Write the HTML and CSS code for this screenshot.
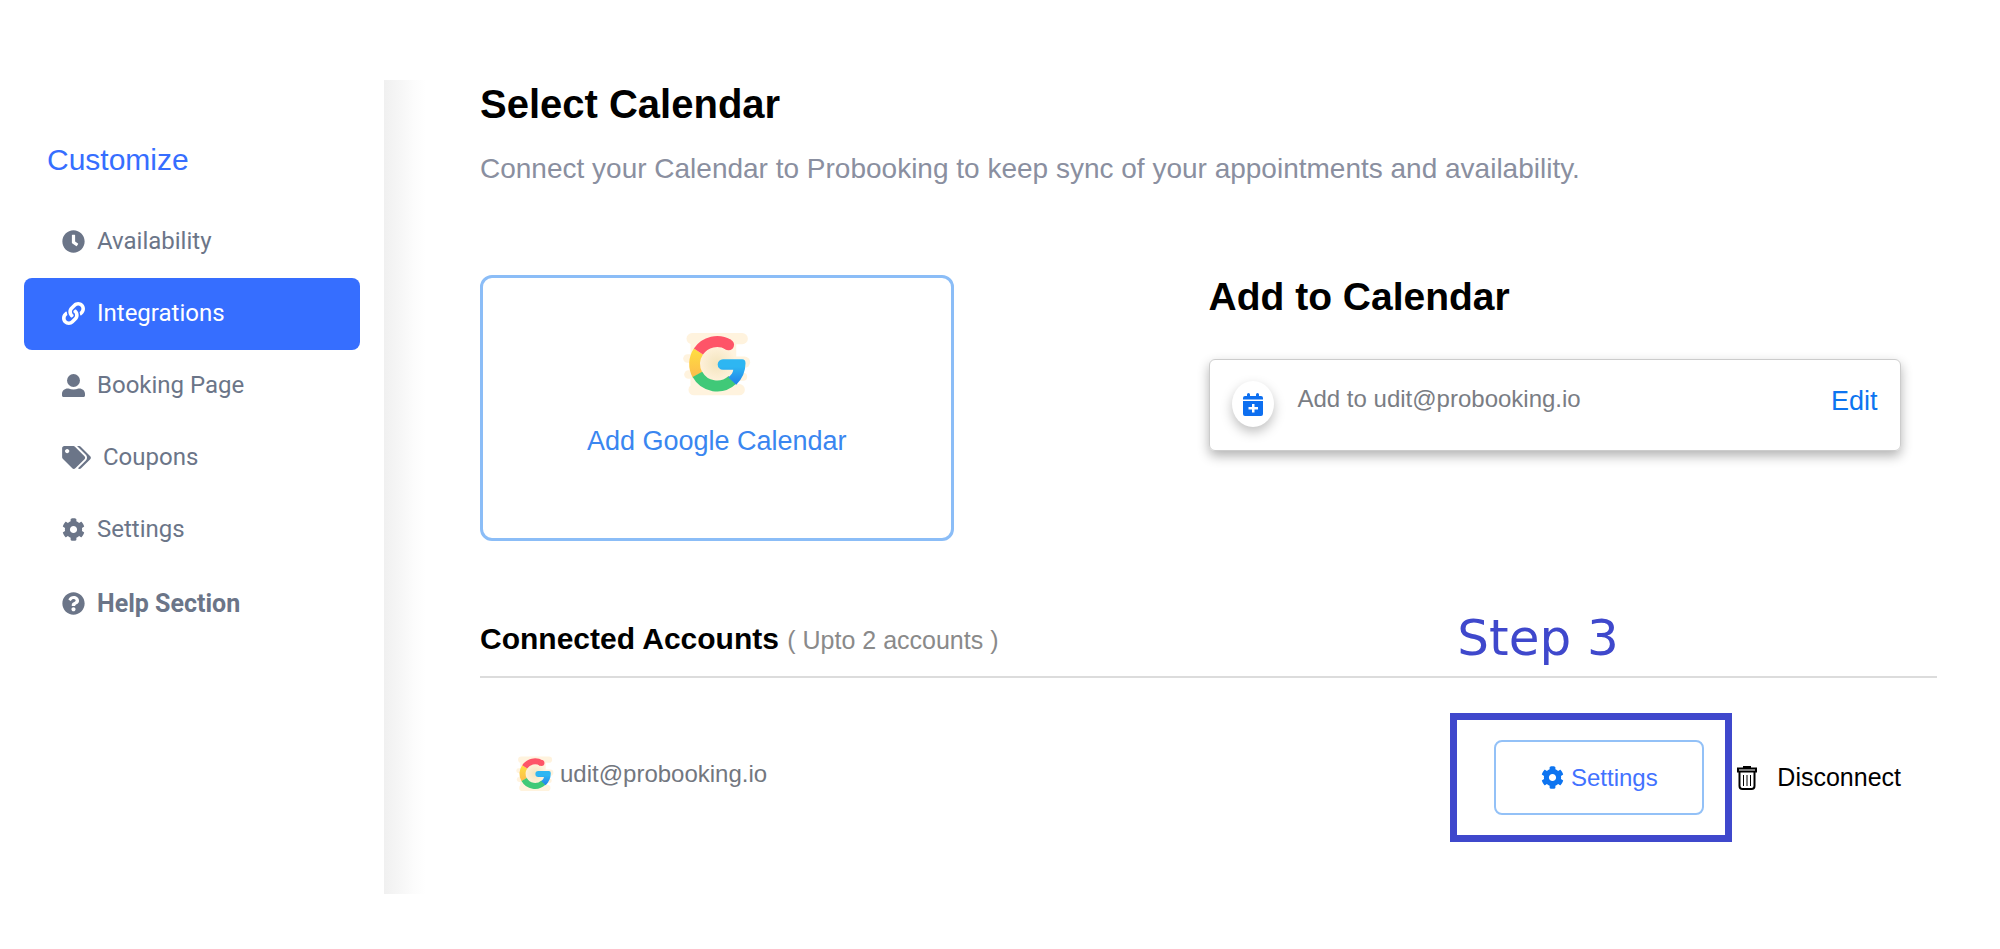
FILE: index.html
```html
<!DOCTYPE html>
<html lang="en">
<head>
    <meta charset="UTF-8">
    <meta name="viewport" content="width=device-width, initial-scale=1.0">
    <title>Select Calendar</title>
    <link rel="stylesheet" href="styles.css">
</head>
<body>
    <!-- Shared icons -->
    <svg class="sprite" aria-hidden="true">
        <symbol id="icon-cog" viewBox="0 0 512 512">
            <path d="M487.4 315.7l-42.6-24.6c4.3-23.2 4.3-47 0-70.2l42.6-24.6c4.9-2.8 7.1-8.6 5.5-14-11.1-35.6-30-67.8-54.7-94.6-3.8-4.1-10-5.1-14.8-2.3L380.8 110c-17.9-15.4-38.5-27.3-60.8-35.1V25.8c0-5.6-3.9-10.5-9.4-11.7-36.7-8.2-74.3-7.8-109.2 0-5.5 1.2-9.4 6.1-9.4 11.7V75c-22.2 7.9-42.8 19.8-60.8 35.1L88.7 85.5c-4.9-2.8-11-1.9-14.8 2.3-24.7 26.7-43.6 58.9-54.7 94.6-1.7 5.4.6 11.2 5.5 14L67.3 221c-4.3 23.2-4.3 47 0 70.2l-42.6 24.6c-4.9 2.8-7.1 8.6-5.5 14 11.1 35.6 30 67.8 54.7 94.6 3.8 4.1 10 5.1 14.8 2.3l42.6-24.6c17.9 15.4 38.5 27.3 60.8 35.1v49.2c0 5.6 3.9 10.5 9.4 11.7 36.7 8.2 74.3 7.8 109.2 0 5.5-1.2 9.4-6.1 9.4-11.7v-49.2c22.2-7.9 42.8-19.8 60.8-35.1l42.6 24.6c4.9 2.8 11 1.9 14.8-2.3 24.7-26.7 43.6-58.9 54.7-94.6 1.5-5.5-.7-11.3-5.6-14.1zM256 336c-44.1 0-80-35.9-80-80s35.9-80 80-80 80 35.9 80 80-35.9 80-80 80z"/>
        </symbol>
        <linearGradient id="g-yellow" x1="0" y1="0" x2="0" y2="1">
            <stop offset="0" stop-color="#fedb41"/>
            <stop offset="1" stop-color="#fdbf4b"/>
        </linearGradient>
        <linearGradient id="g-blue" x1="0" y1="0" x2="0" y2="1">
            <stop offset="0.3" stop-color="#2eb6f2"/>
            <stop offset="1" stop-color="#2180e8"/>
        </linearGradient>
        <radialGradient id="g-center">
            <stop offset="0" stop-color="#f3e4bd"/>
            <stop offset="1" stop-color="#fff2dc"/>
        </radialGradient>
        <symbol id="icon-google" viewBox="668 214 204 196">
            <g fill="#fff3de">
                <rect x="678" y="217" width="185" height="34" rx="17"/>
                <rect x="690" y="245" width="138" height="130"/>
                <rect x="668" y="281" width="60" height="26" rx="13"/>
                <rect x="810" y="288" width="60" height="34" rx="17"/>
                <rect x="671" y="329" width="60" height="26" rx="13"/>
                <rect x="801" y="337" width="60" height="24" rx="12"/>
                <rect x="684" y="371" width="170" height="34" rx="17"/>
            </g>
            <circle cx="770" cy="310" r="55" fill="url(#g-center)"/>
            <path fill="none" stroke="url(#g-yellow)" stroke-width="33" d="M714 273A67.500 67.500 0 0 0 711 343"/>
            <path fill="none" stroke="#40c978" stroke-width="33" d="M711 342A67.500 67.500 0 0 0 816 359"/>
            <path fill="none" stroke="#fe5468" stroke-width="33" d="M714 273A67.500 67.500 0 0 1 805 252.500"/>
            <circle cx="805" cy="252.500" r="16.500" fill="#fe5468"/>
            <path fill="url(#g-blue)" d="M788 296H846Q856 296 856 308Q856 345 828 373L804 351Q818 340 819 328H788A16 16 0 0 1 788 296Z"/>
        </symbol>
    </svg>

    <div class="layout">
        <!-- Sidebar -->
        <aside class="sidebar">
            <h2 class="sidebar-title">Customize</h2>
            <nav class="menu">
                <a href="#" class="menu-item">
                    <svg class="icon" viewBox="0 0 512 512"><path d="M256 8C119 8 8 119 8 256s111 248 248 248 248-111 248-248S393 8 256 8zm57.100 350.100L224.900 294c-3.100-2.300-4.900-5.900-4.900-9.700V116c0-6.600 5.400-12 12-12h48c6.600 0 12 5.400 12 12v137.700l63.500 46.200c5.400 3.900 6.500 11.400 2.600 16.800l-28.200 38.800c-3.900 5.300-11.400 6.500-16.800 2.600z"/></svg>
                    Availability
                </a>
                <a href="#" class="menu-item active">
                    <svg class="icon" viewBox="0 0 512 512"><path d="M326.612 185.391c59.747 59.809 58.927 155.698.36 214.59-.11.12-.24.25-.36.37l-67.2 67.2c-59.27 59.27-155.699 59.262-214.96 0-59.27-59.26-59.27-155.7 0-214.96l37.106-37.106c9.84-9.84 26.786-3.3 27.294 10.606.648 17.722 3.826 35.527 9.69 52.721 1.986 5.822.567 12.262-3.783 16.612l-13.087 13.087c-28.026 28.026-28.905 73.66-1.155 101.96 28.024 28.579 74.086 28.749 102.325.51l67.2-67.19c28.191-28.191 28.073-73.757 0-101.83-3.701-3.694-7.429-6.564-10.341-8.569a16.037 16.037 0 0 1-6.947-12.606c-.396-10.567 3.348-21.456 11.698-29.806l21.054-21.055c5.521-5.521 14.182-6.199 20.584-1.731a152.482 152.482 0 0 1 20.522 17.197zM467.547 44.449c-59.261-59.262-155.69-59.27-214.96 0l-67.2 67.2c-.12.12-.25.25-.36.37-58.566 58.892-59.387 154.781.36 214.59a152.454 152.454 0 0 0 20.521 17.196c6.402 4.468 15.064 3.789 20.584-1.731l21.054-21.055c8.35-8.35 12.094-19.239 11.698-29.806a16.037 16.037 0 0 0-6.947-12.606c-2.912-2.005-6.64-4.875-10.341-8.569-28.073-28.073-28.191-73.639 0-101.83l67.2-67.19c28.239-28.239 74.3-28.069 102.325.51 27.75 28.3 26.872 73.934-1.155 101.96l-13.087 13.087c-4.35 4.35-5.769 10.79-3.783 16.612 5.864 17.194 9.042 34.999 9.69 52.721.509 13.906 17.454 20.446 27.294 10.606l37.106-37.106c59.271-59.259 59.271-155.699.001-214.959z"/></svg>
                    Integrations
                </a>
                <a href="#" class="menu-item">
                    <svg class="icon" viewBox="0 0 512 512"><circle cx="256" cy="144" r="144"/><path d="M0 478v-36c0-72 56-122 128-122h18c70 30 150 30 220 0h18c72 0 128 50 128 122v36c0 20-14 34-34 34H34c-20 0-34-14-34-34z"/></svg>
                    Booking Page
                </a>
                <a href="#" class="menu-item">
                    <svg class="icon icon-wide" viewBox="0 0 640 512"><path d="M497.941 225.941L286.059 14.059A48 48 0 0 0 252.118 0H48C21.49 0 0 21.49 0 48v204.118a48 48 0 0 0 14.059 33.941l211.882 211.882c18.744 18.745 49.136 18.746 67.882 0l204.118-204.118c18.745-18.745 18.745-49.137 0-67.882zM112 160c-26.510 0-48-21.490-48-48s21.490-48 48-48 48 21.490 48 48-21.490 48-48 48zm513.941 133.823L421.823 497.941c-18.745 18.745-49.137 18.745-67.882 0l-.36-.36L527.640 323.522c16.999-16.999 26.360-39.600 26.360-63.640s-9.362-46.641-26.360-63.640L331.397 0h48.721a48 48 0 0 1 33.941 14.059l211.882 211.882c18.745 18.745 18.745 49.137 0 67.882z"/></svg>
                    Coupons
                </a>
                <a href="#" class="menu-item">
                    <svg class="icon"><use href="#icon-cog"/></svg>
                    Settings
                </a>
                <a href="#" class="menu-item help">
                    <svg class="icon" viewBox="0 0 512 512"><path d="M504 256c0 136.997-111.043 248-248 248S8 392.997 8 256C8 119.083 119.043 8 256 8s248 111.083 248 248zM262.655 90c-54.497 0-89.255 22.957-116.549 63.758-3.536 5.286-2.353 12.415 2.715 16.258l34.699 26.31c5.205 3.947 12.621 3.008 16.665-2.122 17.864-22.658 30.113-35.797 57.303-35.797 20.429 0 45.698 13.148 45.698 32.958 0 14.976-12.363 22.667-32.534 33.976C247.128 238.528 216 254.941 216 296v4c0 6.627 5.373 12 12 12h56c6.627 0 12-5.373 12-12v-1.333c0-28.462 83.186-29.647 83.186-106.667 0-58.002-60.165-102-116.531-102zM256 338c-25.365 0-46 20.635-46 46 0 25.364 20.635 46 46 46s46-20.636 46-46c0-25.365-20.635-46-46-46z"/></svg>
                    Help Section
                </a>
            </nav>
        </aside>

        <!-- Main content -->
        <main class="content">
            <h1>Select Calendar</h1>
            <p class="subtitle">Connect your Calendar to Probooking to keep sync of your appointments and availability.</p>

            <div class="row">
                <div class="col">
                    <button type="button" class="google-card">
                        <svg class="google-logo"><use href="#icon-google"/></svg>
                        <span>Add Google Calendar</span>
                    </button>
                </div>
                <div class="col">
                    <h2 class="add-title">Add to Calendar</h2>
                    <div class="add-card">
                        <span class="round-icon">
                            <svg viewBox="0 0 20 23"><path d="M4 1.500a1 1 0 0 1 3 0V3h6V1.500a1 1 0 0 1 3 0V3h2a2 2 0 0 1 2 2v1.500H0V5a2 2 0 0 1 2-2h2zM0 8h20v13a2 2 0 0 1-2 2H2a2 2 0 0 1-2-2zm9 3v3H5.500v2.500H9v3h2.500v-3H15V14h-3.500v-3z"/></svg>
                        </span>
                        <span class="add-text">Add to udit@probooking.io</span>
                        <a href="#" class="edit">Edit</a>
                    </div>
                </div>
            </div>

            <!-- Connected accounts -->
            <section class="accounts">
                <h3>Connected Accounts <small>( Upto 2 accounts )</small></h3>
                <div class="account">
                    <div class="account-name">
                        <svg class="google-small"><use href="#icon-google"/></svg>
                        <span>udit@probooking.io</span>
                    </div>
                    <div class="highlight">
                        <span class="step">Step 3</span>
                        <button type="button" class="btn-settings">
                            <svg class="icon"><use href="#icon-cog"/></svg>
                            Settings
                        </button>
                    </div>
                    <button type="button" class="btn-disconnect">
                        <svg class="trash" viewBox="0 0 20 24"><path d="M7 2.500V1h6v1.500M1 2.500h18v3H1zM2.500 5.500V20a3 3 0 0 0 3 3h9a3 3 0 0 0 3-3V5.500"/><path class="thin" d="M6.500 9v11M10 9v11M13.500 9v11"/></svg>
                        Disconnect
                    </button>
                </div>
            </section>
        </main>
    </div>
</body>
</html>
```
FILE: styles.css
```css
/* General Styles */
* {
    box-sizing: border-box;
}

body {
    margin: 0;
    padding: 80px 0 55px;
    font-family: "Liberation Sans", Arial, sans-serif;
    font-size: 24px;
    background-color: #fff;
    color: #000;
}

h1, h2, h3, p {
    margin: 0;
}

a {
    text-decoration: none;
}

button {
    font-family: inherit;
    background: none;
    border: none;
    padding: 0;
    cursor: pointer;
}

.sprite {
    position: absolute;
    width: 0;
    height: 0;
}

.icon {
    width: 23px;
    height: 23px;
    fill: currentColor;
    flex: none;
}

.icon-wide {
    width: 29px;
}

.layout {
    display: flex;
    min-height: 814px;
}

/* Sidebar */
.sidebar {
    width: 384px;
    flex: none;
    padding: 62px 24px 0;
}

.sidebar-title {
    padding-left: 23px;
    margin-bottom: 28px;
    font-size: 30px;
    line-height: 36px;
    font-weight: normal;
    color: #366eff;
}

.menu-item {
    display: flex;
    align-items: center;
    gap: 12px;
    height: 72px;
    padding: 0 0 2px 38px;
    border-radius: 8px;
    font-family: Roboto, sans-serif;
    font-size: 24px;
    color: #6b7588;
}

.menu-item.active {
    background-color: #366eff;
    color: #fff;
}

.menu-item.help {
    margin-top: 2px;
    font-size: 25px;
    font-weight: bold;
}

/* Main content */
.content {
    flex: 1;
    padding: 0 63px 0 96px;
    background: linear-gradient(to right, #f0f0f0, #fcfcfc 30px, #fff 42px);
}

h1 {
    font-size: 40px;
    line-height: 48px;
}

.subtitle {
    margin-top: 24px;
    font-size: 28px;
    line-height: 34px;
    color: #8a8fa0;
}

.row {
    display: flex;
    margin-top: 89px;
}

.col {
    flex: 1;
}

.google-card {
    display: flex;
    flex-direction: column;
    align-items: center;
    gap: 28px;
    width: 65%;
    height: 266px;
    padding-top: 54px;
    border: 3px solid #8bbdf7;
    border-radius: 12px;
    font-size: 27px;
    line-height: 32px;
    color: #3a86f0;
}

.google-logo {
    width: 68px;
    height: 65px;
}

.add-title {
    font-size: 39px;
    line-height: 44px;
}

.add-card {
    display: flex;
    align-items: flex-start;
    width: 95%;
    height: 92px;
    margin-top: 40px;
    padding: 21px 22px;
    border: 1px solid #ccc;
    border-radius: 6px;
    box-shadow: 0 5px 12px rgba(0, 0, 0, 0.3);
}

.round-icon {
    display: flex;
    align-items: center;
    justify-content: center;
    width: 42px;
    height: 46px;
    border-radius: 50%;
    box-shadow: 0 5px 12px rgba(0, 0, 0, 0.25);
}

.round-icon svg {
    width: 20px;
    height: 23px;
    fill: #0d6ff0;
}

.add-text {
    flex: 1;
    margin-left: 24px;
    line-height: 36px;
    color: #7a7d84;
}

.edit {
    font-size: 27px;
    line-height: 40px;
    color: #0d74f0;
}

/* Connected accounts */
.accounts {
    margin-top: 80px;
}

h3 {
    padding-bottom: 18px;
    border-bottom: 2px solid #dcdcdc;
    font-size: 30px;
    line-height: 36px;
}

h3 small {
    font-size: 25px;
    font-weight: normal;
    color: #8a8a8a;
}

.account {
    display: flex;
    align-items: center;
    margin-top: 35px;
    padding: 0 36px;
}

.account-name {
    display: flex;
    align-items: center;
    flex: 1;
    gap: 6px;
    padding-bottom: 8px;
    color: #73777f;
}

.google-small {
    width: 38px;
    height: 36px;
}

.highlight {
    position: relative;
    padding: 20px 21px 20px 37px;
    border: 7px solid #3f48cc;
}

/* Label floating above the highlighted button */
.step {
    position: absolute;
    left: 0;
    bottom: 100%;
    padding-bottom: 52px;
    font-family: "DejaVu Sans", sans-serif;
    font-size: 50px;
    line-height: 60px;
    white-space: nowrap;
    color: #3f48cc;
}

.btn-settings {
    display: flex;
    align-items: center;
    justify-content: center;
    gap: 7px;
    width: 210px;
    height: 75px;
    border: 2px solid #93c1f7;
    border-radius: 8px;
    font-size: 24px;
    color: #4272ff;
}

.btn-settings .icon {
    fill: #0d74f0;
}

.btn-disconnect {
    display: flex;
    align-items: center;
    gap: 20px;
    margin-left: 5px;
    font-size: 25px;
    color: #000;
}

.trash {
    width: 20px;
    height: 24px;
    fill: none;
    stroke: #000;
    stroke-width: 2;
}

.trash .thin {
    stroke-width: 1;
}
```
